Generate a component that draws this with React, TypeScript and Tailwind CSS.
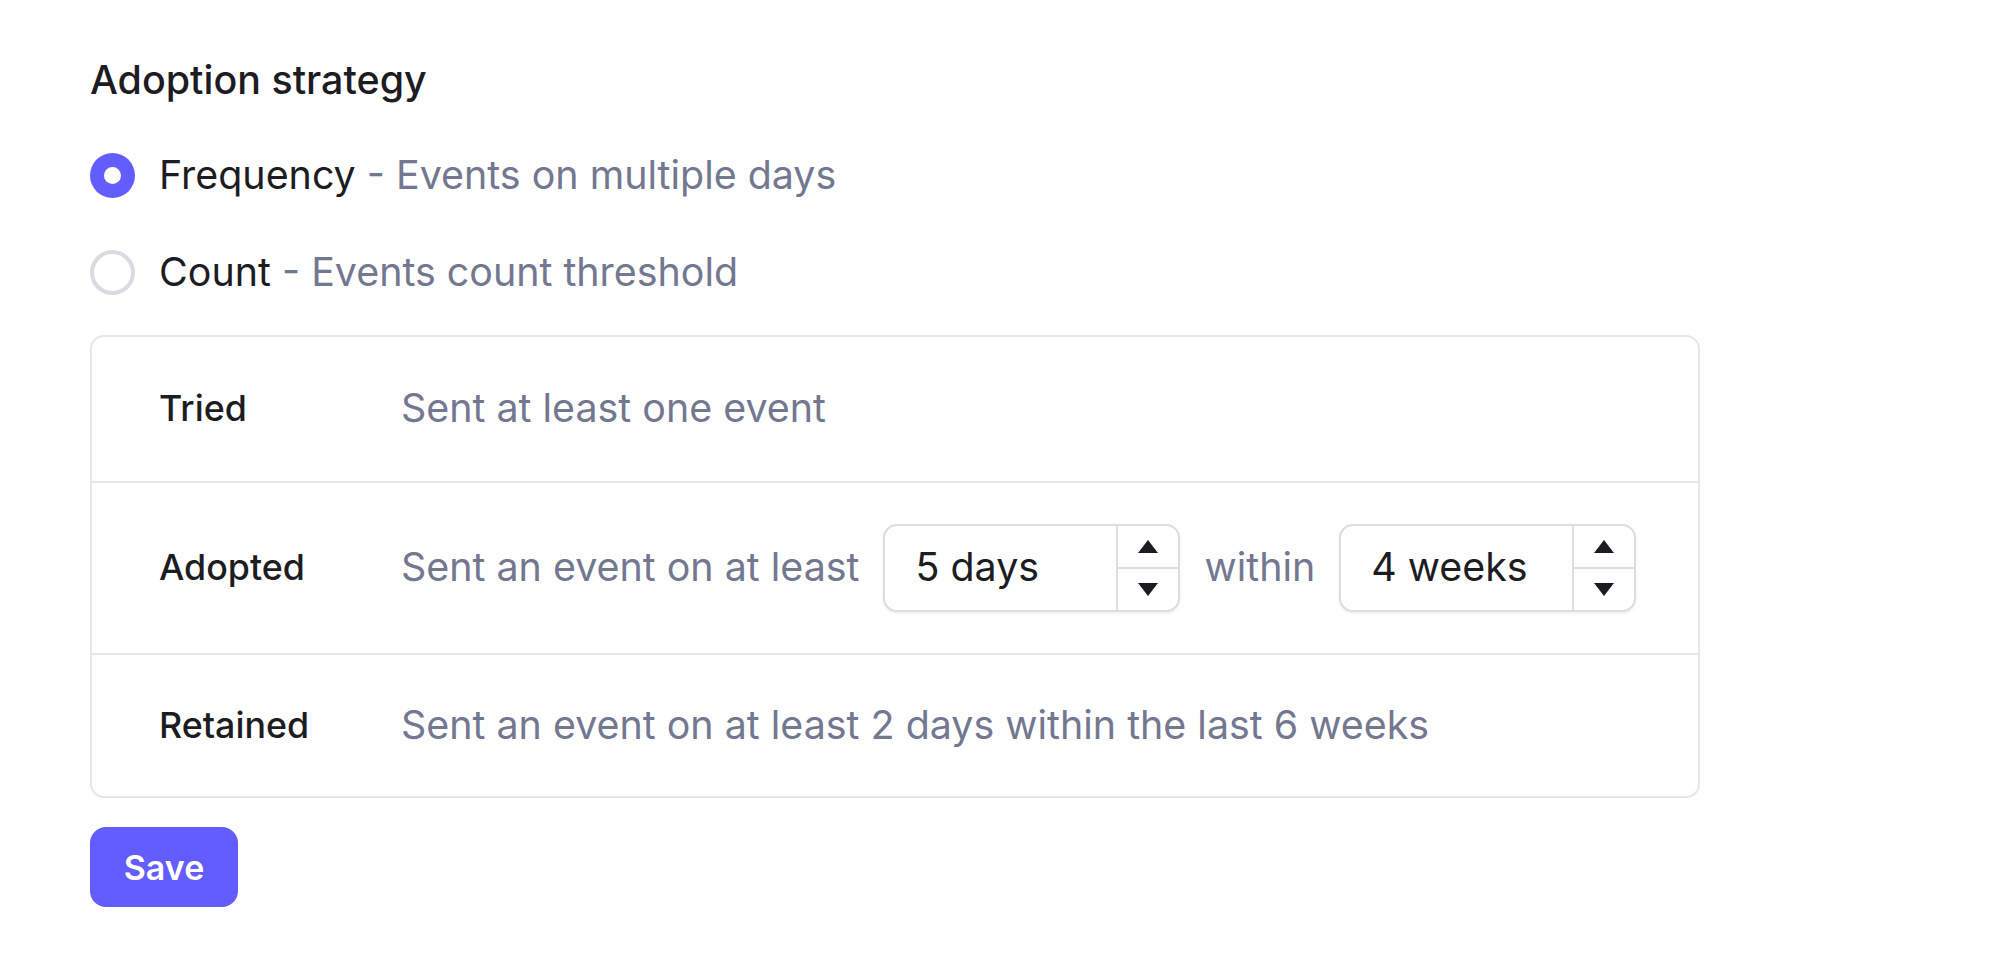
import React from "react";

function Spinner() {
  return (
    <div className="flex flex-col w-[62px] border-l-2 border-[#dedee3] self-stretch">
      <div className="flex-1 flex items-center justify-center border-b-2 border-[#dedee3]">
        <svg width="20" height="13" viewBox="0 0 20 13"><polygon points="10,0 20,13 0,13" fill="#1c1c22" /></svg>
      </div>
      <div className="flex-1 flex items-center justify-center">
        <svg width="20" height="13" viewBox="0 0 20 13"><polygon points="0,0 20,0 10,13" fill="#1c1c22" /></svg>
      </div>
    </div>
  );
}

function NumberBox({ value }: { value: string }) {
  return (
    <div className="flex items-stretch w-[297px] h-[88px] border-2 border-[#dcdce1] rounded-[14px] bg-white shadow-[0_2px_3px_rgba(0,0,0,0.06)] overflow-hidden">
      <div className="flex-1 flex items-center pl-[30px] text-[#1c1c22]">{value}</div>
      <Spinner />
    </div>
  );
}

export default function App() {
  return (
    <div
      className="min-h-[958px] bg-white pl-[90px] pt-[56px] text-[39.4px]"
      style={{ fontFamily: "Inter, 'Noto Sans', sans-serif" }}
    >
      <h2 className="text-[39.4px] leading-[48px] font-medium text-[#1c1c22]">Adoption strategy</h2>

      <div className="mt-[47px] flex flex-col gap-[49px]">
        <div className="flex items-center h-[48px] gap-[24px]">
          <div className="w-[45px] h-[45px] rounded-full bg-[#635dff] flex items-center justify-center">
            <div className="w-[17px] h-[17px] rounded-full bg-white" />
          </div>
          <div className="leading-[48px] whitespace-nowrap">
            <span className="text-[#1c1c22]">Frequency</span>
            <span className="text-[#737790]"> - Events on multiple days</span>
          </div>
        </div>
        <div className="flex items-center h-[48px] gap-[24px]">
          <div className="w-[45px] h-[45px] rounded-full border-[4px] border-[#dadae0] bg-white" />
          <div className="leading-[48px] whitespace-nowrap">
            <span className="text-[#1c1c22]">Count</span>
            <span className="text-[#737790]"> - Events count threshold</span>
          </div>
        </div>
      </div>

      <div className="mt-[39px] w-[1610px] border-2 border-[#e7e7eb] rounded-[14px] flex flex-col">
        <div className="flex items-center h-[144px] pl-[67px]">
          <div className="w-[242px] text-[35.8px] font-medium text-[#1c1c22]">Tried</div>
          <div className="text-[#737790]">Sent at least one event</div>
        </div>
        <div className="flex items-center h-[172px] pl-[67px] border-t-2 border-[#e7e7eb]">
          <div className="w-[242px] text-[35.8px] font-medium text-[#1c1c22]">Adopted</div>
          <div className="flex items-center gap-[24px] whitespace-nowrap">
            <span className="text-[#737790]">Sent an event on at least</span>
            <NumberBox value="5 days" />
            <span className="text-[#737790]">within</span>
            <NumberBox value="4 weeks" />
          </div>
        </div>
        <div className="flex items-center h-[143px] pl-[67px] border-t-2 border-[#e7e7eb]">
          <div className="w-[242px] text-[35.8px] font-medium text-[#1c1c22]">Retained</div>
          <div className="text-[#737790]">Sent an event on at least 2 days within the last 6 weeks</div>
        </div>
      </div>

      <button className="mt-[29px] w-[148px] h-[80px] rounded-[16px] bg-[#635dff] text-white font-semibold text-[34px] flex items-center justify-center">
        Save
      </button>
    </div>
  );
}
